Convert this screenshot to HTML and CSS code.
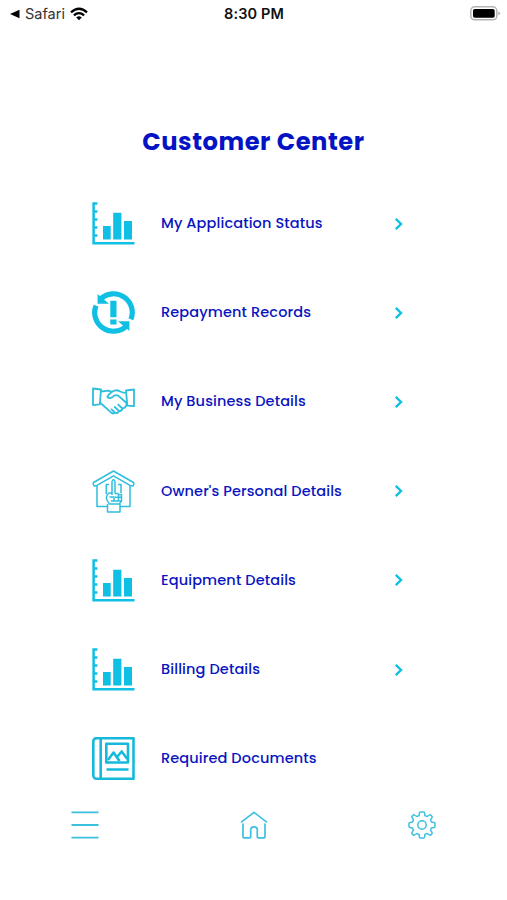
FILE: index.html
```html
<!DOCTYPE html>
<html lang="en">
<head>
    <meta charset="UTF-8">
    <meta name="viewport" content="width=device-width, initial-scale=1.0">
    <title>Customer Center</title>
    <link rel="stylesheet" href="styles.css">
</head>
<body>
    <svg class="sprite">
        <symbol id="chart" viewBox="0 0 43 43">
            <path d="M5.4 1.4H1.6V41.2H42.5M1.6 9.4H5.4M1.6 17.4H5.4M1.6 25.4H5.4M1.6 33.4H5.4" fill="none" stroke="currentColor" stroke-width="2.5"/>
            <path d="M11 24H18.7V37.4H11ZM21.2 10.7H29.4V37.4H21.2ZM32 19H40V37.4H32Z" fill="currentColor"/>
        </symbol>
        <symbol id="chevron" viewBox="0 0 9 12">
            <path d="M1.8 .9L7 6L1.8 11.1" fill="none" stroke="currentColor" stroke-width="2.4"/>
        </symbol>
    </svg>
    <header class="status-bar">
        <div class="back">
            <svg width="10" height="10" viewBox="0 0 10 10"><path d="M0 5L9.5 .7V9.3Z"/></svg>
            <span>Safari</span>
            <svg width="18" height="14" viewBox="0 0 18 14">
                <path d="M1 5.3Q9-1.8 17 5.3M3.9 8.3Q9 4 14.1 8.3" fill="none" stroke="#000" stroke-width="2.3"/>
                <path d="M6.2 10.4Q9 8.2 11.8 10.4L9 13.3Z"/>
            </svg>
        </div>
        <div class="time">8:30 PM</div>
        <svg class="battery" width="31" height="15" viewBox="0 0 31 15">
            <rect x=".8" y=".8" width="26" height="13" rx="3.8" fill="#fff" stroke="#b4b4b4" stroke-width="1.5"/>
            <rect x="3" y="3" width="21.7" height="8.8" rx="1.8"/>
            <path d="M28.4 5.4Q32 7.3 28.4 9.3Z" fill="#aaa"/>
        </svg>
    </header>
    <main>
        <h1>Customer Center</h1>
        <ul class="menu">
            <li>
                <svg class="icon"><use href="#chart"/></svg>
                <span class="label">My Application Status</span>
                <svg class="chevron"><use href="#chevron"/></svg>
            </li>
            <li>
                <svg class="icon" viewBox="0 0 43 43">
                    <g fill="none" stroke="currentColor" stroke-width="5.2">
                        <path d="M9 7.5A18.8 18.8 0 0 1 39 28.4"/>
                        <path d="M34 35.5A18.8 18.8 0 0 1 4 14.6"/>
                    </g>
                    <path d="M5.6 3V12.8H17ZM37.4 40V30.2H26Z" fill="currentColor"/>
                    <path d="M18.3 9.8H24.5V26.3H18.3ZM18.3 28.5H24.5V33.6H18.3Z" fill="currentColor"/>
                </svg>
                <span class="label">Repayment Records</span>
                <svg class="chevron"><use href="#chevron"/></svg>
            </li>
            <li>
                <svg class="icon line" viewBox="0 0 43 43">
                    <path d="M1 8.5L9 9.5L7.8 24.4L1 25.2ZM42 9.5L34 10.5L35.3 25.7L42 26.2Z"/>
                    <path d="M9 11.5L16.5 10.6L20.3 12.2M34 12.7C29.5 13.5 27.5 9.8 23.5 10.3C19.5 11 17 14 15.3 16.8C16.8 19.2 20.5 17.5 22.5 15.3L26 15.4L34 22.5Q35.6 24.2 33.8 26"/>
                    <path d="M8 22.5L19.5 32.8Q21.5 34.3 23 32.5L19 28.8M23 32.5Q25.6 34 27 31L22.2 26.5M27 31Q29.8 31.3 30.4 28.5L25.7 24.2M30.4 28.5Q33 28.3 34 25.7"/>
                </svg>
                <span class="label">My Business Details</span>
                <svg class="chevron"><use href="#chevron"/></svg>
            </li>
            <li>
                <svg class="icon line thin" viewBox="0 0 43 43">
                    <path d="M1.5 12.5L21.5 1L41.5 12.5Q42.5 14 40.8 16L38 15.4L21.5 5.8L5 15.4L2.3 16Q.6 14 1.5 12.5Z"/>
                    <path d="M5 16V36.5H15M38 16V36.5H28M14.3 24V14.5H17M29 23V14.5H26"/>
                    <path d="M20 25V11.5Q21.5 7.8 23 11.5V23.5M20 23H17Q14 25 14.5 29L17.3 34H27.3L29.5 31V24.5H26.5V31M23 23.5H26.5M23 27.2H29.5M21 31H29.5M17.5 27H22V31H19M15.5 34V42H28V34"/>
                </svg>
                <span class="label">Owner's Personal Details</span>
                <svg class="chevron"><use href="#chevron"/></svg>
            </li>
            <li>
                <svg class="icon"><use href="#chart"/></svg>
                <span class="label">Equipment Details</span>
                <svg class="chevron"><use href="#chevron"/></svg>
            </li>
            <li>
                <svg class="icon"><use href="#chart"/></svg>
                <span class="label">Billing Details</span>
                <svg class="chevron"><use href="#chevron"/></svg>
            </li>
            <li>
                <svg class="icon line book" viewBox="0 0 43 43">
                    <path d="M5 1.2H41.5V41.8H5Q1.3 41.8 1.3 38V5Q1.3 1.2 5 1.2ZM8.7 1.2V41.8M14.3 6.8H36V25.5H14.3ZM14.5 32.5H36.5"/>
                    <path d="M16 23L21.5 15.5L27.5 24M25 20L29.7 14.5L35.3 22"/>
                </svg>
                <span class="label">Required Documents</span>
            </li>
        </ul>
    </main>
    <nav class="tab-bar">
        <svg viewBox="0 0 28 28"><path d="M.5 1.4H27.5M.5 14H27.5M.5 26.6H27.5" stroke-width="1.8"/></svg>
        <svg viewBox="0 0 28 28"><path d="M1 11.3L14 1.3L27 11.3M3 12.5V25.8Q3 26.8 4 26.8H9.7Q10.7 26.8 10.7 25.8V18.5Q11 15.8 14 15.8Q17 15.8 17.3 18.5V25.8Q17.3 26.8 18.3 26.8H24Q25 26.8 25 25.8V12.5"/></svg>
        <svg class="gear" viewBox="0 0 28 28">
            <path d="M12.4 1H15.6Q16.5 1 16.6 2L16.9 4.6L19.2 5.5L21.4 4Q22.1 3.4 22.8 4.1L23.9 5.2Q24.6 5.9 24 6.6L22.5 8.8L23.4 11.1L26 11.4Q27 11.5 27 12.4V15.6Q27 16.5 26 16.6L23.4 16.9L22.5 19.2L24 21.4Q24.6 22.1 23.9 22.8L22.8 23.9Q22.1 24.6 21.4 24L19.2 22.5L16.9 23.4L16.6 26Q16.5 27 15.6 27H12.4Q11.5 27 11.4 26L11.1 23.4L8.8 22.5L6.6 24Q5.9 24.6 5.2 23.9L4.1 22.8Q3.4 22.1 4 21.4L5.5 19.2L4.6 16.9L2 16.6Q1 16.5 1 15.6V12.4Q1 11.5 2 11.4L4.6 11.1L5.5 8.8L4 6.6Q3.4 5.9 4.1 5.2L5.2 4.1Q5.9 3.4 6.6 4L8.8 5.5L11.1 4.6L11.4 2Q11.5 1 12.4 1Z"/>
            <circle cx="14" cy="14" r="4.2"/>
        </svg>
    </nav>
</body>
</html>
```
FILE: styles.css
```css
*{
    margin: 0;
    padding: 0;
    box-sizing: border-box;
}

body{
    height: 900px;
    background: #fff;
    font-family: Poppins, Inter, sans-serif;
    overflow: hidden;
}

svg{
    display: block;
    flex: none;
}

.sprite{
    display: none;
}

.status-bar{
    display: grid;
    grid-template-columns: 1fr auto 1fr;
    align-items: center;
    height: 27px;
    padding: 0 6px 0 10px;
    font-family: Inter, sans-serif;
    font-size: 14.5px;
    color: #111;
}

.back{
    display: flex;
    align-items: center;
    gap: 5px;
    color: #333;
}

.time{
    margin-right: 3px;
    font-weight: 600;
    letter-spacing: 0.1px;
}

.battery{
    justify-self: end;
}

h1{
    margin-top: 97px;
    height: 36px;
    line-height: 36px;
    font-size: 24.2px;
    font-weight: 700;
    letter-spacing: 0.55px;
    text-align: center;
    color: #0413c4;
}

.menu{
    margin-top: 19px;
    padding: 0 104px 0 92px;
    list-style: none;
    color: #0fbfe4;
}

.menu li{
    display: flex;
    align-items: center;
    height: 89.2px;
}

.icon{
    width: 43px;
    height: 43px;
}

.label{
    flex: 1;
    margin-left: 26px;
    font-size: 14.5px;
    font-weight: 500;
    letter-spacing: 0.12px;
    color: #0a14c0;
}

.chevron{
    width: 9px;
    height: 12px;
}

.line{
    fill: none;
    stroke: #2fbfdd;
    stroke-width: 1.8;
    stroke-linejoin: round;
}

.thin{
    stroke-width: 1.5;
}

.book{
    stroke: #16b9dc;
    stroke-width: 2.6;
}

.tab-bar{
    display: flex;
    justify-content: space-between;
    margin-top: 8px;
    padding: 0 71px;
}

.tab-bar svg{
    width: 28px;
    height: 28px;
    fill: none;
    stroke: #3cc0df;
    stroke-width: 1.7;
    stroke-linejoin: round;
}

.tab-bar .gear{
    stroke-width: 1.5;
}
```
